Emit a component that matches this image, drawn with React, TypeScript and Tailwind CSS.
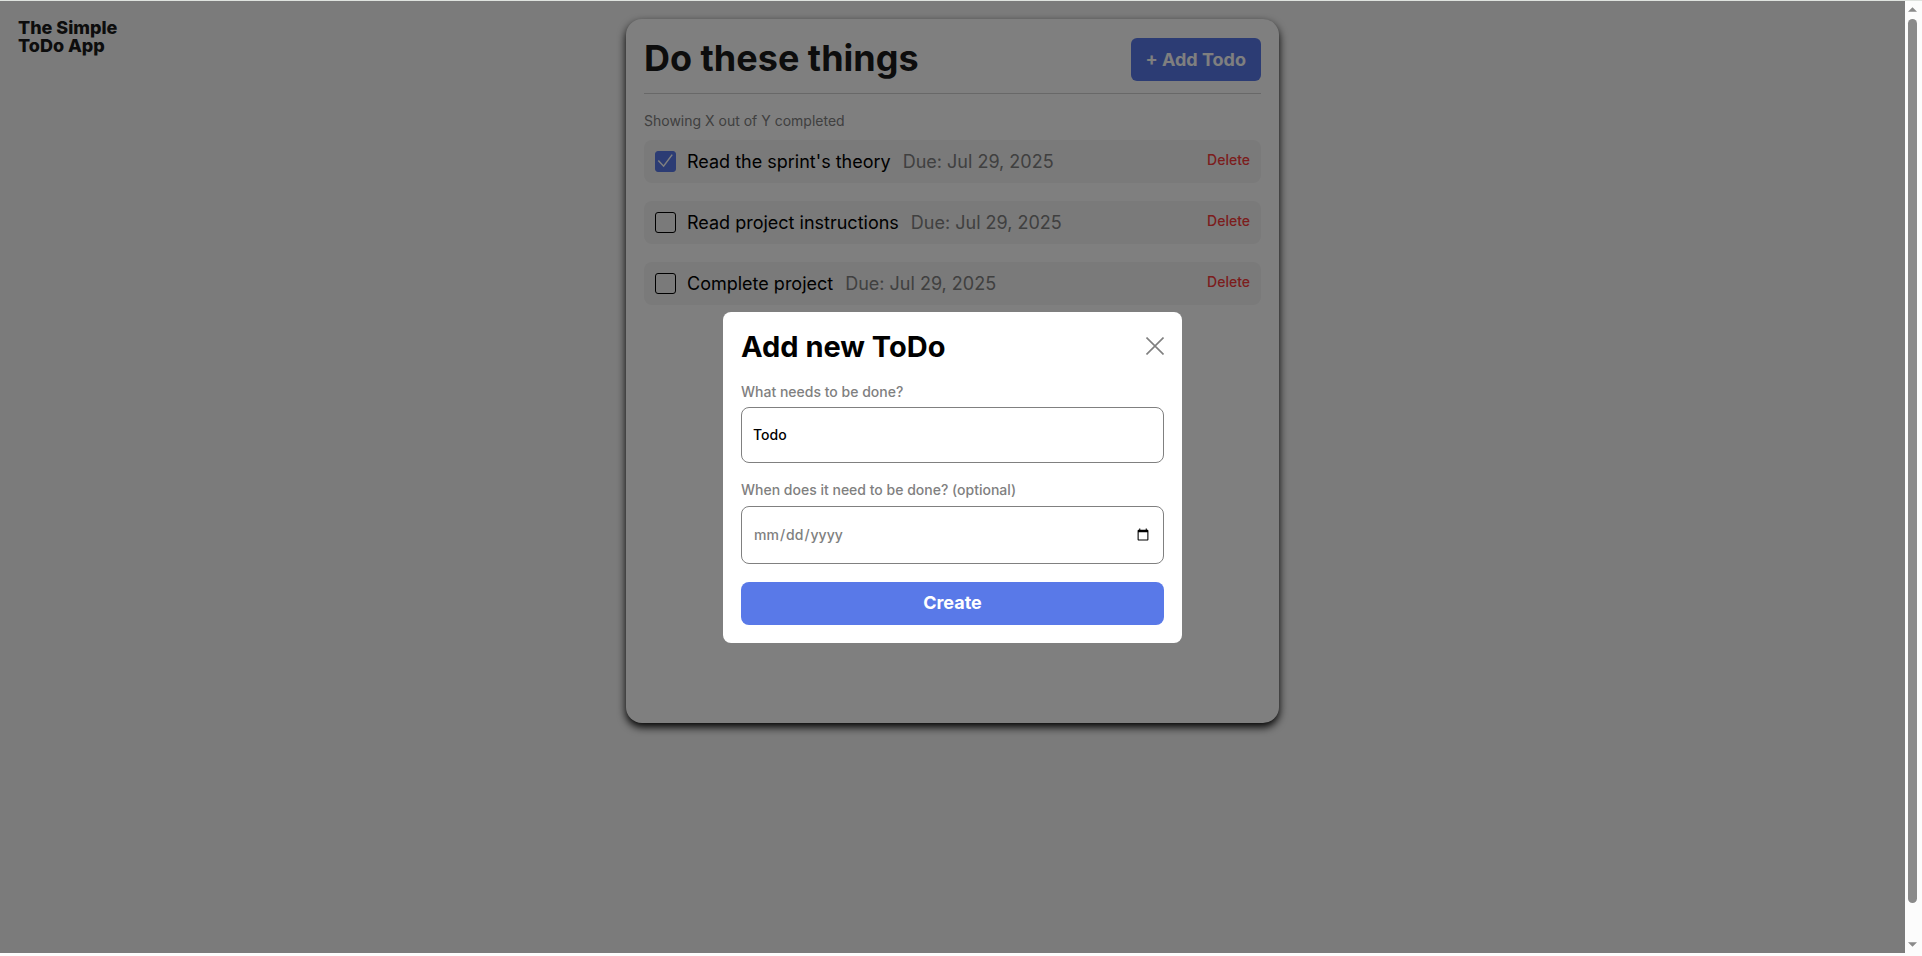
import { useState } from "react";

type Todo = { id: string; name: string; due: string; completed: boolean };

const initialTodos: Todo[] = [
  { id: "todo-1", name: "Read the sprint's theory", due: "Jul 29, 2025", completed: true },
  { id: "todo-2", name: "Read project instructions", due: "Jul 29, 2025", completed: false },
  { id: "todo-3", name: "Complete project", due: "Jul 29, 2025", completed: false },
];

function TodoItem({
  todo,
  onToggle,
  onDelete,
}: {
  todo: Todo;
  onToggle: () => void;
  onDelete: () => void;
}) {
  return (
    <li className="flex h-[43px] items-center rounded-lg bg-[#f4f4f4] px-[11px]">
      <span className="grid h-[21px] w-[21px] shrink-0">
        <input
          id={todo.id}
          type="checkbox"
          checked={todo.completed}
          onChange={onToggle}
          className="col-start-1 row-start-1 appearance-none rounded-[3px] border border-black checked:border-[#5979e8] checked:bg-[#5979e8]"
        />
        {todo.completed && (
          <svg
            viewBox="0 0 21 21"
            fill="none"
            stroke="white"
            strokeWidth="1.5"
            className="pointer-events-none col-start-1 row-start-1"
            aria-hidden="true"
          >
            <path d="M3.3 9.6 8.6 15.2 17.2 3.6" />
          </svg>
        )}
      </span>
      <label htmlFor={todo.id} className="ml-[11px] text-lg">
        {todo.name}
      </label>
      <span className="ml-3 text-lg text-[#808080]">Due: {todo.due}</span>
      <button type="button" onClick={onDelete} className="mb-1 ml-auto text-sm font-medium text-[#f83b3b]">
        Delete
      </button>
    </li>
  );
}

function AddTodoDialog({ onClose }: { onClose: () => void }) {
  return (
    <div className="absolute inset-0 flex items-center justify-center bg-black/50">
      <form
        role="dialog"
        aria-labelledby="dialog-title"
        onSubmit={(event) => event.preventDefault()}
        className="flex w-full max-w-[459px] flex-col rounded-lg bg-white p-[18px]"
      >
        <div className="flex items-start justify-between">
          <h2 id="dialog-title" className="text-[29px] leading-[34px] font-bold">
            Add new ToDo
          </h2>
          <button type="button" aria-label="Close" onClick={onClose} className="pt-[7px]">
            <svg width="18" height="18" viewBox="0 0 18 18" fill="none" stroke="#808080" strokeWidth="1.6" aria-hidden="true">
              <path d="M.5.5 17.5 17.5M17.5.5.5 17.5" />
            </svg>
          </button>
        </div>
        <label htmlFor="todo-name" className="mt-[18px] text-sm font-medium text-[#808080]">
          What needs to be done?
        </label>
        <input
          id="todo-name"
          type="text"
          defaultValue="Todo"
          className="mt-[5px] h-14 rounded-lg border border-[#808080] px-[11px] text-sm font-medium"
        />
        <label htmlFor="todo-date" className="mt-[17px] text-sm font-medium text-[#808080]">
          When does it need to be done? (optional)
        </label>
        <input
          id="todo-date"
          type="date"
          className="mt-1.5 h-[58px] rounded-lg border border-[#808080] px-[11px] text-sm font-medium text-[#808080]"
        />
        <button type="submit" className="mt-[18px] h-[43px] rounded-lg bg-[#5979e8] text-lg font-bold text-white">
          Create
        </button>
      </form>
    </div>
  );
}

function Scrollbar() {
  return (
    <div className="flex w-[17px] shrink-0 flex-col items-center bg-[#fcfcfc] pt-1.5 pr-0.5 pb-1.5" aria-hidden="true">
      <svg width="9" height="5" viewBox="0 0 10 5" fill="#8a8a8a">
        <path d="M5 0 10 5H0z" />
      </svg>
      <div className="mt-[7px] w-[9px] grow rounded-full bg-[#8a8a8a]" />
      <svg width="9" height="5" viewBox="0 0 10 5" fill="#8a8a8a" className="mt-[39px]">
        <path d="M0 0H10L5 5z" />
      </svg>
    </div>
  );
}

export default function App() {
  const [todos, setTodos] = useState(initialTodos);
  const [dialogOpen, setDialogOpen] = useState(true);

  const toggle = (id: string) =>
    setTodos(todos.map((todo) => (todo.id === id ? { ...todo, completed: !todo.completed } : todo)));

  return (
    <div className="flex h-screen border-t border-[#dfe3df] bg-[#fcfcfc] pb-[3px] font-['Inter',sans-serif] text-black">
      <div className="relative grid min-w-0 grow grid-cols-[1fr_minmax(0,653px)_1fr] items-start bg-[#f6f6f6] py-[18px]">
        <p className="pl-[18px] text-lg leading-[18px] font-extrabold text-[#1a1a1a]">
          The Simple
          <br />
          ToDo App
        </p>
        <main className="min-h-[704px] rounded-2xl bg-white px-[18px] pt-[19px] shadow-[0_4px_8px_#000]">
          <header className="flex items-start justify-between border-b border-[#d0d0d0] pb-3">
            <h1 className="text-4xl leading-[41px] font-bold text-[#1a1a1a]">Do these things</h1>
            <button
              type="button"
              onClick={() => setDialogOpen(true)}
              className="h-[43px] rounded-md bg-[#5979e8] px-[15px] text-lg font-bold text-white"
            >
              + Add Todo
            </button>
          </header>
          <p className="mt-[17px] text-sm text-[#808080]">Showing X out of Y completed</p>
          <ul className="mt-[9px] flex flex-col gap-[18px]">
            {todos.map((todo) => (
              <TodoItem
                key={todo.id}
                todo={todo}
                onToggle={() => toggle(todo.id)}
                onDelete={() => setTodos(todos.filter((other) => other.id !== todo.id))}
              />
            ))}
          </ul>
        </main>
        {dialogOpen && <AddTodoDialog onClose={() => setDialogOpen(false)} />}
      </div>
      <Scrollbar />
    </div>
  );
}
